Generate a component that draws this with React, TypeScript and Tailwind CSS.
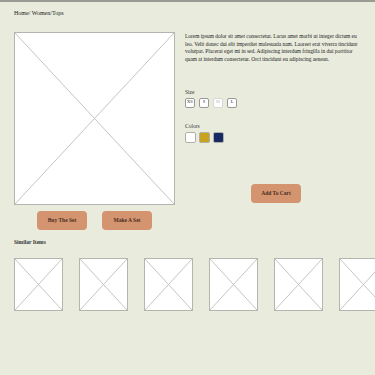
const serif = { fontFamily: '"Liberation Serif", "DejaVu Serif", serif' };

function Placeholder({ className }: { className: string }) {
    return (
        <div className={`relative shrink-0 border border-[#b5b5b0] bg-white ${className}`}>
            <svg className="absolute inset-0 h-full w-full" preserveAspectRatio="none" viewBox="0 0 100 100">
                <line x1="0" y1="0" x2="100" y2="100" stroke="#c4c4c0" strokeWidth="1" vectorEffect="non-scaling-stroke" />
                <line x1="100" y1="0" x2="0" y2="100" stroke="#c4c4c0" strokeWidth="1" vectorEffect="non-scaling-stroke" />
            </svg>
        </div>
    );
}

function ActionButton({ label, className = "" }: { label: string; className?: string }) {
    return (
        <button className={`flex h-[19px] w-[50px] items-center justify-center rounded-[4px] bg-[#d4946f] text-[5.5px] font-semibold text-[#4a3023] ${className}`}>
            {label}
        </button>
    );
}

const sizes = ["XS", "S", "M", "L"];
const colors = ["bg-white", "bg-[#c9a21f]", "bg-[#172a63]"];

export default function App() {
    return (
        <div style={serif} className="h-[375px] w-[375px] overflow-hidden border-t-2 border-[#9a9c94] bg-[#e9ecdd] text-[#222]">
            {/* breadcrumb */}
            <p className="ml-[14px] mt-[7px] text-[6px] leading-[8px] text-[#222]">Home/ Women/Tops</p>

            <div className="mt-[15px] flex pl-[14px]">
                {/* left: main image + set buttons */}
                <div className="flex w-[161px] flex-col">
                    <Placeholder className="h-[173px] w-[161px]" />
                    <div className="mt-[6px] flex justify-center gap-[15px]">
                        <ActionButton label="Buy The Set" />
                        <ActionButton label="Make A Set" />
                    </div>
                </div>

                {/* right: details */}
                <div className="ml-[10px] flex w-[176px] flex-col">
                    <p className="mt-[1px] text-[5.4px] leading-[7.7px] text-[#222]">
                        Lorem ipsum dolor sit amet consectetur. Lacus amet morbi ut integer dictum eu leo. Velit donec dui elit imperdiet malesuada nam. Laoreet erat viverra tincidunt volutpat. Placerat eget mi in sed. Adipiscing interdum fringilla in dui porttitor quam at interdum consectetur. Orci tincidunt eu adipiscing aenean.
                    </p>

                    <p className="mt-[25px] text-[5.5px] leading-[7px] text-[#333]">Size</p>
                    <div className="mt-[2px] flex gap-[4px]">
                        {sizes.map((s) => (
                            <div
                                key={s}
                                className={`flex h-[10px] w-[10px] items-center justify-center rounded-[2px] border bg-white text-[4.5px] ${s === "M" ? "border-[#d8d8d4] text-[#bbb]" : "border-[#999] text-[#333]"}`}
                            >
                                {s}
                            </div>
                        ))}
                    </div>

                    <p className="mt-[15px] text-[5.5px] leading-[7px] text-[#333]">Colors</p>
                    <div className="mt-[2px] flex gap-[3px]">
                        {colors.map((c) => (
                            <div key={c} className={`h-[11px] w-[11px] rounded-[2px] border border-[#b0b0aa] ${c}`} />
                        ))}
                    </div>

                    <ActionButton label="Add To Cart" className="ml-[66px] mt-[41px] h-[18px]" />
                </div>
            </div>

            <p className="ml-[14px] mt-[9px] text-[5.5px] font-semibold leading-[7px] text-[#333]">Similar Items</p>
            <div className="mt-[12px] flex gap-[16px] pl-[14px]">
                {[0, 1, 2, 3, 4, 5].map((i) => (
                    <Placeholder key={i} className="h-[53px] w-[49px]" />
                ))}
            </div>
        </div>
    );
}
